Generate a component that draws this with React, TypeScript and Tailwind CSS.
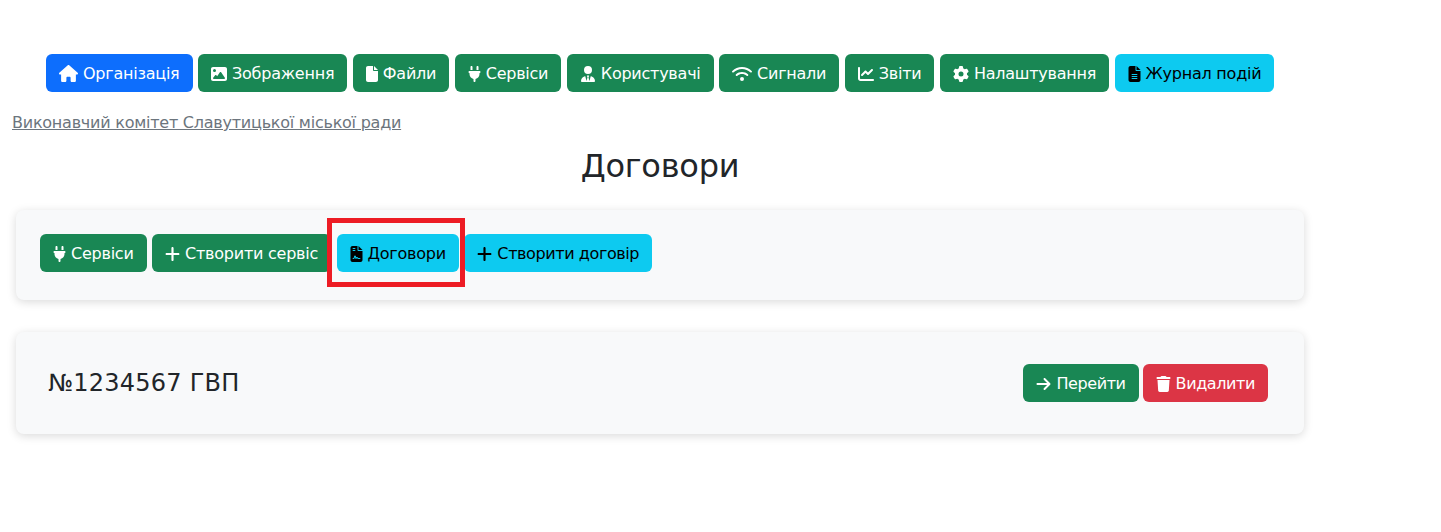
import type { ReactNode } from 'react';
import {
  FaArrowRight,
  FaChartLine,
  FaFile,
  FaFileContract,
  FaFileLines,
  FaGear,
  FaHouse,
  FaImage,
  FaPlug,
  FaPlus,
  FaTrash,
  FaUserTie,
  FaWifi,
} from 'react-icons/fa6';

const green = 'bg-[#198754] text-white';
const blue = 'bg-[#0d6efd] text-white';
const cyan = 'bg-[#0dcaf0] text-black';
const red = 'bg-[#dc3545] text-white';

function Btn({ color, icon, children }: { color: string; icon: ReactNode; children: ReactNode }) {
  return (
    <a className={`flex h-[38px] items-center gap-[5px] whitespace-nowrap rounded-md px-[13px] pt-px text-base ${color}`}>
      {icon}
      <span>{children}</span>
    </a>
  );
}

export default function App() {
  return (
    <div className="h-[532px] w-[1320px] bg-white px-3 pt-[54px] font-['DejaVu_Sans',sans-serif] tracking-[-0.015em] text-[#212529]">
      <nav className="flex gap-[5.5px] pl-[34px]">
        <Btn color={blue} icon={<FaHouse className="h-[17px] w-[19px]" />}>Організація</Btn>
        <Btn color={green} icon={<FaImage className="h-4 w-4" />}>Зображення</Btn>
        <Btn color={green} icon={<FaFile className="h-4 w-3" />}>Файли</Btn>
        <Btn color={green} icon={<FaPlug className="h-4 w-[13px]" />}>Сервіси</Btn>
        <Btn color={green} icon={<FaUserTie className="h-4 w-4" />}>Користувачі</Btn>
        <Btn color={green} icon={<FaWifi className="h-4 w-5" />}>Сигнали</Btn>
        <Btn color={green} icon={<FaChartLine className="h-4 w-4" />}>Звіти</Btn>
        <Btn color={green} icon={<FaGear className="h-4 w-4" />}>Налаштування</Btn>
        <Btn color={cyan} icon={<FaFileLines className="h-4 w-[13px]" />}>Журнал подій</Btn>
      </nav>

      <div className="mt-[19px] leading-6">
        <a className="text-base text-[#6c757d] underline">Виконавчий комітет Славутицької міської ради</a>
      </div>

      <h1 className="mt-[12px] text-center text-[32px] leading-[38px]">Договори</h1>

      <section className="relative mx-1 mt-[25px] flex gap-[5.5px] rounded-lg bg-[#f8f9fa] px-6 pb-7 pt-6 shadow-[0_2px_10px_rgba(0,0,0,0.15)]">
        <Btn color={green} icon={<FaPlug className="h-4 w-[13px]" />}>Сервіси</Btn>
        <Btn color={green} icon={<FaPlus className="h-[18px] w-[15px]" />}>Створити сервіс</Btn>
        <Btn color={cyan} icon={<FaFileContract className="h-4 w-[13px]" />}>Договори</Btn>
        <Btn color={cyan} icon={<FaPlus className="h-[18px] w-[15px]" />}>
          <span className="tracking-[-0.4px]">Створити договір</span>
        </Btn>
        <div className="absolute left-[311px] top-2 h-[69px] w-[138px] border-[5px] border-[#ed1c24]" />
      </section>

      <section className="mx-1 mt-8 flex items-start justify-between rounded-lg bg-[#f8f9fa] py-8 pl-8 pr-9 shadow-[0_2px_10px_rgba(0,0,0,0.15)]">
        <h2 className="mt-[2px] text-2xl leading-[34px] tracking-[0.25px]">№1234567 ГВП</h2>
        <div className="flex gap-1">
          <Btn color={green} icon={<FaArrowRight className="h-4 w-[15px]" />}>
            <span className="tracking-[-0.4px]">Перейти</span>
          </Btn>
          <Btn color={red} icon={<FaTrash className="h-4 w-[15px]" />}>
            <span className="tracking-[-0.4px]">Видалити</span>
          </Btn>
        </div>
      </section>
    </div>
  );
}
